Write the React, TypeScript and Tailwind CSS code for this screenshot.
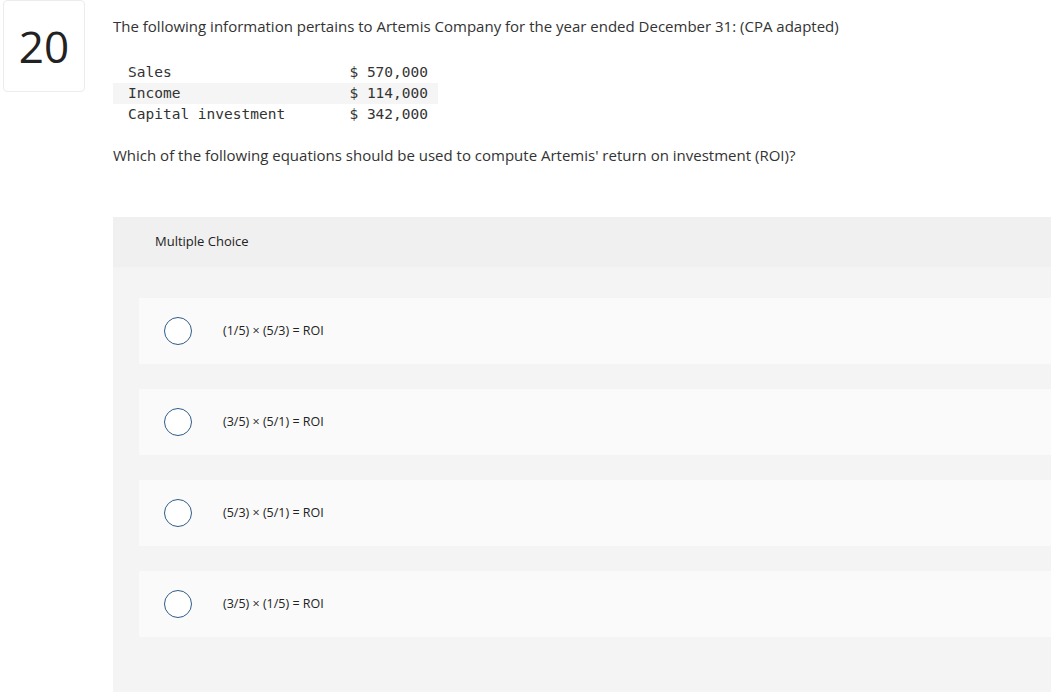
import React from "react";

const options = [
  "(1/5) × (5/3) = ROI",
  "(3/5) × (5/1) = ROI",
  "(5/3) × (5/1) = ROI",
  "(3/5) × (1/5) = ROI",
];

export default function App() {
  return (
    <div className="w-[1051px] h-[697px] bg-white overflow-hidden flex" style={{ fontFamily: '"Open Sans", sans-serif' }}>
      <div className="ml-[3px] w-[82px] h-[92px] border border-[#ececec] rounded-[4px] flex items-center justify-center shrink-0">
        <span className="text-[44px] leading-none text-[#222]" style={{ fontFamily: '"Open Sans", sans-serif' }}>20</span>
      </div>
      <div className="ml-[28px] flex-1 flex flex-col">
        <p className="mt-[16px] text-[15px] leading-[20px] text-[#333]">
          The following information pertains to Artemis Company for the year ended December 31: (CPA adapted)
        </p>
        <div className="mt-[26px] w-[325px] text-[14.5px] text-[#333]" style={{ fontFamily: '"DejaVu Sans Mono", monospace' }}>
          {[
            ["Sales", "$ 570,000"],
            ["Income", "$ 114,000"],
            ["Capital investment", "$ 342,000"],
          ].map(([l, v], i) => (
            <div key={l} className={`flex justify-between h-[21px] items-center pl-[15px] pr-[10px] ${i === 1 ? "bg-[#f5f5f5]" : ""}`}>
              <span>{l}</span>
              <span>{v}</span>
            </div>
          ))}
        </div>
        <p className="mt-[20px] text-[15px] leading-[20px] text-[#333]">
          Which of the following equations should be used to compute Artemis' return on investment (ROI)?
        </p>
        <div className="mt-[52px] bg-[#f4f4f4] h-[475px] flex flex-col">
          <div className="h-[50px] bg-[#f0f0f0] flex items-center pl-[42px] text-[13px] text-[#222]">Multiple Choice</div>
          <div className="pl-[26px] pt-[31px] flex flex-col gap-[25px]">
            {options.map((o) => (
              <div key={o} className="h-[66px] bg-[#fafafa] flex items-center">
                <div className="ml-[25px] w-[28px] h-[28px] rounded-full border-[1.5px] border-[#2f5c8a] bg-white shrink-0" />
                <span className="ml-[31px] text-[12.5px] text-[#222]">{o}</span>
              </div>
            ))}
          </div>
        </div>
      </div>
    </div>
  );
}
